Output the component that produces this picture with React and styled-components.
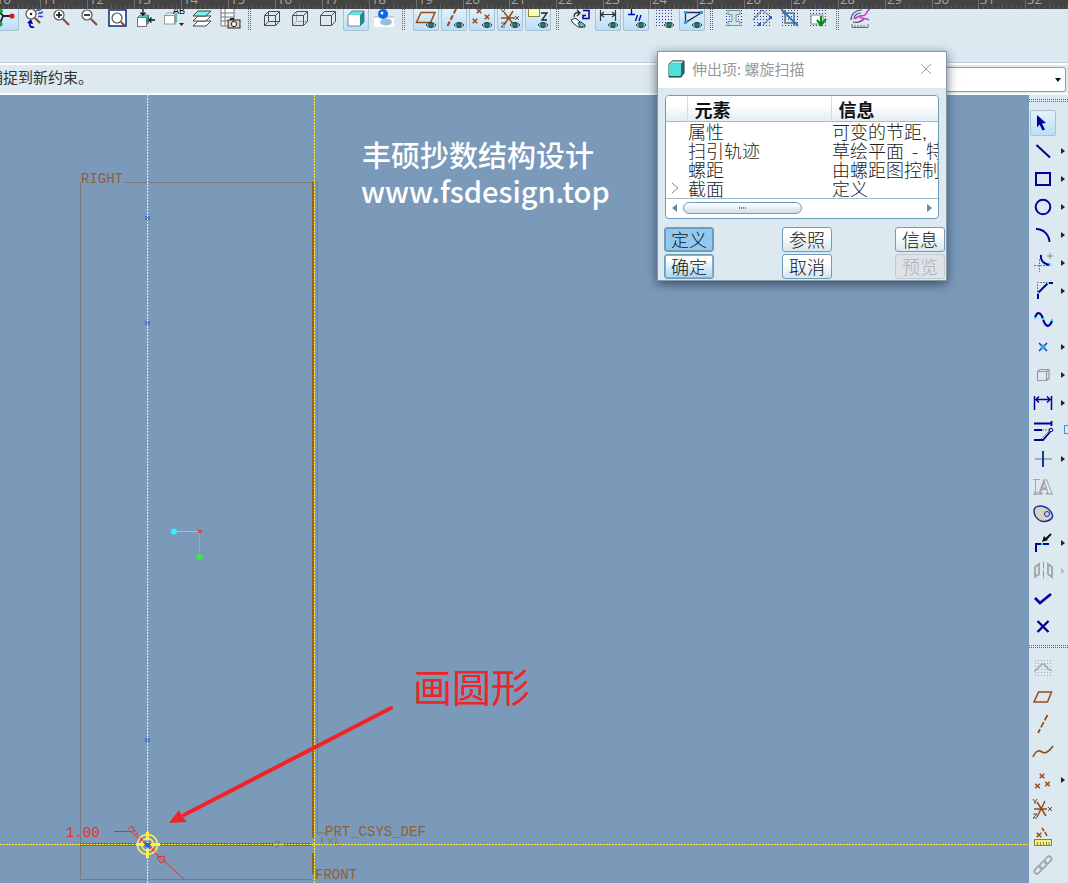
import React from "react";
import styled, { createGlobalStyle, css } from "styled-components";

const sans = `"Noto Sans CJK SC", "Open Sans", sans-serif`;
const navy = "#00009a";
const brown = "#9a4a14";
const panel = "#dce9f1";
const dots = `linear-gradient(transparent 1px, ${panel} 1px) 0 0 / 2px 2px, linear-gradient(90deg, #3f7090 1px, transparent 1px) 0 0 / 2px 2px`;

const GlobalStyle = createGlobalStyle`
  * { box-sizing: border-box; }
  body { margin: 0; background: ${panel}; font-family: ${sans}; color: #222; }
  button { font: inherit; }
`;

const Page = styled.div`
  position: relative;
  display: flex;
  flex-direction: column;
  height: 100vh;
  overflow: hidden;
`;

const RulerBar = styled.div`
  flex: none;
  height: 9px;
  background: #444;
  overflow: hidden;
`;

const RulerSvg = styled.svg`
  display: block;
  width: 100%;
  height: 9px;
  font: 13px "Open Sans", sans-serif;
`;

const ToolArea = styled.header`
  flex: none;
  height: 54px;
  border-bottom: 1px solid #bccbd6;
`;

const ToolRow = styled.div`
  display: flex;
  align-items: flex-end;
  height: 22px;
  margin-left: -8px;
  overflow: hidden;
`;

const Cell = styled.div`
  flex: none;
  display: flex;
  align-items: center;
  width: ${(p) => (p.$side ? "39px" : "28px")};
  height: ${(p) => (p.$side ? "28px" : "26px")};
  padding-left: 1px;
`;

const IconButton = styled.button`
  flex: none;
  width: 26px;
  height: 26px;
  padding: 0;
  border: 0;
  border-radius: 2px;
  background: transparent;
  ${(p) =>
    p.$pressed &&
    css`
      background: linear-gradient(#e6f4fc, #b9def6);
      box-shadow: inset 0 0 0 1px #a9c3d2;
    `}
  svg { display: block; }
`;

const Grip = styled.div`
  flex: none;
  width: 14px;
  height: 26px;
  padding-left: 4px;
  &::before {
    content: "";
    display: block;
    width: 4px;
    height: 26px;
    background: ${dots};
  }
`;

const Message = styled.div`
  flex: none;
  display: flex;
  align-items: center;
  justify-content: space-between;
  height: 32px;
  border-top: 2px solid #fff;
  border-bottom: 2px solid #f6fafc;
  padding-right: 2px;
`;

const MessageText = styled.p`
  margin: 0 0 0 -12px;
  padding-bottom: 4px;
  font-size: 15px;
  line-height: 24px;
  color: #333;
`;

const Filter = styled.select`
  width: 330px;
  height: 25px;
  border: 1px solid #79a3bf;
  border-radius: 3px;
  appearance: none;
  background: #fff;
`;

const FilterWrap = styled.label`
  position: relative;
  display: flex;
  &::after {
    content: "";
    position: absolute;
    right: 5px;
    top: 11px;
    border: 3px solid transparent;
    border-top: 4px solid #111;
    border-bottom: 0;
  }
`;

const Main = styled.main`
  flex: 1;
  display: flex;
  min-height: 0;
`;

const Viewport = styled.section`
  flex: 1;
  min-width: 0;
  background: #7b9aba;
  svg { display: block; width: 100%; height: 100%; }
`;

const CadText = styled.text`
  font: 14px "Liberation Mono", monospace;
  fill: ${(p) => p.$color || "#8f6038"};
`;

const NoteText = styled.text`
  font-family: ${sans};
  font-size: ${(p) => p.$size};
  font-weight: ${(p) => p.$weight || 400};
  fill: ${(p) => p.$color};
`;

const SideBar = styled.aside`
  flex: none;
  width: 39px;
  background: ${panel};
  overflow: hidden;
`;

const SideGrip = styled.div`
  height: ${(p) => (p.$first ? "14px" : "13px")};
  padding-top: 4px;
  &::before {
    content: "";
    display: block;
    height: 4px;
    background: ${dots};
  }
`;

const More = styled.button`
  width: 8px;
  height: 12px;
  margin-left: 5px;
  padding: 0;
  border: 0;
  background: none;
  &::before {
    content: "";
    display: block;
    width: 0;
    border: 3px solid transparent;
    border-left: 4px solid ${(p) => (p.$off ? "#b5bcc4" : "#222")};
    border-right: 0;
  }
`;

const FlyoutEdge = styled.span`
  flex: none;
  width: 12px;
  height: 9px;
  margin: 0 0 4px 8px;
  border: 1px solid #4f86ee;
`;

const Dialog = styled.section`
  position: absolute;
  top: 52px;
  right: 122px;
  width: 288px;
  background: ${panel};
  box-shadow: 0 0 0 1px #8997a4, 0 3px 10px 1px rgba(20, 35, 55, 0.65);
`;

const TitleBar = styled.header`
  display: flex;
  align-items: center;
  height: 36px;
  padding: 0 13px 2px 9px;
  gap: 6px;
  background: #fff;
`;

const Title = styled.h1`
  flex: 1;
  margin: 0;
  font-size: 15px;
  font-weight: 400;
  line-height: 24px;
  color: #999;
`;

const CloseButton = styled.button`
  width: 14px;
  height: 14px;
  padding: 0;
  border: 0;
  background: none;
  svg { display: block; }
`;

const DialogBody = styled.div`
  padding: 7px 1px 1px 7px;
`;

const ListBox = styled.div`
  width: 274px;
  height: 124px;
  border: 1px solid #6f9cb8;
  border-radius: 4px;
  background: #fff;
  overflow: hidden;
`;

const ElementTable = styled.table`
  width: 272px;
  table-layout: fixed;
  border-collapse: collapse;
  font-size: 18px;
  font-weight: 300;
  line-height: 19px;
`;

const HeadCell = styled.th`
  width: ${(p) => p.$w};
  height: 25px;
  padding: 2px 0 0 7px;
  border-bottom: 1px solid #9dbccd;
  border-right: 1px solid #cfdee6;
  background: linear-gradient(#fff, #fff 35%, #e2edf3);
  text-align: left;
  line-height: 22px;
  font-weight: 700;
  color: #111;
  &:last-child { border-right: 0; }
`;

const BodyCell = styled.td`
  height: 19px;
  padding: 0 0 0 1px;
  white-space: pre;
  overflow: hidden;
  svg { display: block; margin-left: 4px; }
`;

const ScrollRow = styled.div`
  display: flex;
  align-items: center;
  height: 20px;
  padding: 0 5px;
  border-top: 1px solid #9dbccd;
`;

const ScrollArrow = styled.button`
  width: 7px;
  height: 10px;
  padding: 0;
  border: 0;
  background: none;
  svg { display: block; }
`;

const Track = styled.div`
  flex: 1;
  padding: 0 5px;
`;

const Thumb = styled.div`
  display: flex;
  align-items: center;
  justify-content: center;
  width: 119px;
  height: 12px;
  border: 1px solid #6f9cb8;
  border-radius: 6px;
  background: linear-gradient(#fff, #cfe0ea);
  &::before {
    content: "";
    width: 8px;
    height: 2px;
    background: linear-gradient(90deg, #5e8aa6 1px, transparent 1px) 0 0 / 2px 2px;
  }
`;

const Actions = styled.div`
  display: grid;
  grid-template-columns: 118px 113px 50px;
  row-gap: 2px;
  padding-top: 8px;
  margin-left: -1px;
`;

const ActionButton = styled.button`
  width: 50px;
  height: 25px;
  padding: 0;
  border: 1px solid #6f9cb8;
  border-radius: 3px;
  background: linear-gradient(#fff 30%, #d5e6f0);
  font-size: 18px;
  font-weight: 300;
  line-height: 21px;
  color: #111;
  ${(p) => p.$active && css`background: #93c8f0; box-shadow: inset 0 0 0 1px #6f9cb8;`}
  ${(p) => p.$primary && css`background: linear-gradient(#fff 20%, #a9d3ef); box-shadow: inset 0 0 0 1px #86aec7;`}
  &:disabled { background: #dde3e6; border-color: #c0cad0; color: #aab0b4; }
`;

/* ---------- icon parts ---------- */

const Ico = ({ children }) => (
  <svg width="26" height="26" viewBox="0 0 26 26" fill="none" aria-hidden="true">
    {children}
  </svg>
);
const Eye = () => (
  <g>
    <path d="M13 20q5-5 10 0q-5 5-10 0z" fill="#fff" stroke="#333" />
    <circle cx="18" cy="20" r="2.4" fill="#117f7b" stroke="#143c3c" strokeWidth=".8" />
  </g>
);
const Cross = ({ x, y, r = 2.3, c = brown }) => (
  <path d={`M${x - r} ${y - r}l${2 * r} ${2 * r}m0 ${-2 * r}l${-2 * r} ${2 * r}`} stroke={c} strokeWidth="1.5" />
);
const Grid = ({ c = "#2438b0", x = 5, y = 5, n = 6 }) => (
  <path
    d={Array.from({ length: n }, (_, i) => `M${x} ${y + i * 3 + 0.5}h${(n - 1) * 3 + 1}`).join("")}
    stroke={c}
    strokeDasharray="1 2"
  />
);
const Lens = ({ x, y, r = 5, len = 6, mark }) => (
  <g>
    <path d={`M${x + 4} ${y + 4}l${len} ${len}`} stroke="#8b4c38" strokeWidth="2.2" />
    <circle cx={x} cy={y} r={r} fill="#fff" stroke="#555" strokeWidth="1.2" />
    {mark && <path d={mark} stroke="#111" strokeWidth="1.6" />}
  </g>
);
const Cyan = ({ pts }) => pts.map(([x, y]) => <rect key={`${x}-${y}`} x={x - 1} y={y - 1} width="2" height="2" fill="#20e4f4" />);

const I = {
  spin: <><path d="M5 5l5 6-4 10M10 11h7" stroke="#222" strokeWidth="1.8" /><circle cx="8" cy="6" r="2" fill="#14a33a" /><circle cx="7" cy="19" r="2.500" fill="#14a33a" /><circle cx="19" cy="11" r="2.6" fill="#e01818" /></>,
  refit: <><Lens x={10} y={9} len={5} /><circle cx="10" cy="9" r="1.3" fill="#222" /><path d="M15 6l2-1.500 1 1 3-2M17 9l2-1.500 1 1 2-2M17 12l2-1 1 1 2-1" stroke="#2840b8" strokeWidth="1.2" /><path d="M13 22c-4 1-5-2-4-5" stroke={navy} strokeWidth="1.800" /><path d="M6 18l4-4 2 5z" fill={navy} /></>,
  zin: <Lens x={10} y={10} mark="M7 10h6M10 7v6" />,
  zout: <Lens x={10} y={10} mark="M7 10h6" />,
  zfit: <><rect x="4" y="5" width="17" height="16" fill="#fff" stroke="#123a80" strokeWidth="1.6" /><Lens x={12} y={13} len={4} /></>,
  orient: <><path d="M4 13l3-3h9l-3 3z" fill="#3ed5d0" stroke="#666" strokeWidth=".7" /><path d="M13 13l3-3v8l-3 3z" fill="#1f8e8e" /><rect x="4.500" y="12.500" width="9" height="9" fill="#fff" stroke="#777" /><path d="M10 3v7M7.500 7.500L10 10l2.500-2.500M22 15h-6M18.500 12.500L16 15l2.500 2.500" stroke="#111" strokeWidth="1.3" /></>,
  saved: <><path d="M13 11l3-3v9l-3 3z" fill="#6aa9a9" /><path d="M3.500 11l3-3h9l-3 3z" fill="#dff" stroke="#777" strokeWidth=".7" /><rect x="3.500" y="10.500" width="10" height="8.500" fill="#fff" stroke="#999" /><text x="12" y="9" fontSize="10" fontFamily="Liberation Mono" fill="#111">AB</text><path d="M18 18h5l-2.500 3z" fill="#222" /></>,
  layers: <><path d="M4 21l5-5h13l-5 5z" fill="#fff" stroke="#444" /><path d="M4 16l5-5h13l-5 5z" fill="#fff" stroke="#444" /><path d="M4 11l5-5h13l-5 5z" fill="#7deff0" stroke="#444" /></>,
  camera: <><path d="M4 3h13v18H4zM8 3v18M4 8h13M4 12h13M4 16h13" fill="#fff" stroke="#777" /><rect x="11" y="15" width="12" height="8" fill="#d6d1b4" stroke="#222" /><path d="M13 14h4" stroke="#222" strokeWidth="2" /><circle cx="17" cy="19" r="2.600" fill="#fff" stroke="#222" /></>,
  wire: <path d="M5.500 10.500h11v10h-11zM9.500 6.500h11v10h-11zM5.500 10.500l4-4M16.500 10.500l4-4M5.500 20.500l4-4M16.500 20.500l4-4" stroke="#4c4c4c" />,
  hidden: <><path d="M9.500 7v9.500h11M5.500 20.500l4-4" stroke="#aaa" /><path d="M5.500 10.500h11v10h-11zM5.500 10.500l4-4h11v10l-4 4M16.500 10.500l4-4" stroke="#4c4c4c" /></>,
  nohid: <path d="M5.500 10.500h11v10h-11zM5.500 10.500l4-4h11v10l-4 4M16.500 10.500l4-4" stroke="#4c4c4c" />,
  shade: <><path d="M5 10l4-4h12l-4 4z" fill="#5fe6e6" /><path d="M17 10l4-4v11l-4 4z" fill="#208c8c" /><rect x="5" y="10" width="12" height="11" fill="#fff" /><path d="M5 10l4-4h12v11l-4 4H5z" stroke="#557" strokeWidth=".7" /></>,
  ball: <><rect x="3" y="12" width="20" height="10" fill="#fff" /><path d="M3 12h20" stroke="#a7b4bd" /><ellipse cx="15" cy="17" rx="6" ry="3.500" fill="#9ebcd8" /><circle cx="12" cy="9" r="5" fill="#0968ef" /><circle cx="11" cy="8" r="1.500" fill="#e5f4ff" /></>,
  planeE: <><path d="M8 7.500h14l-4.500 10H3.500z" stroke={brown} strokeWidth="1.500" /><Eye /></>,
  axisE: <><path d="M15 4L6 22" stroke={brown} strokeWidth="2" strokeDasharray="5 2" /><Eye /></>,
  ptsE: <><Cross x={10} y={6} /><Cross x={6} y={16} /><Cross x={18} y={12} /><Eye /></>,
  csysE: <><path d="M4 13h14M7 7l9 12M16 6L7 20" stroke={brown} strokeWidth="1.500" /><path d="M4 4l2 3 2-3M4 18h4l-4 4h4M18 11l4 4m0-4l-4 4" stroke="#555" /><Eye /></>,
  noteE: <><rect x="3.500" y="2.500" width="11" height="9" fill="#fffdb0" stroke="#888844" /><path d="M16 8h6l-5 7h5" stroke="#222" strokeWidth="1.300" /><Eye /></>,
  sketchView: <><path d="M16 5.500h6v8h-6v-3h3" stroke={navy} strokeWidth="1.500" /><path d="M7 12c0-4 2-5 6-4M10 5l3 3-3 3" stroke="#222" strokeWidth="1.200" /><path d="M4 15l4-2 3 2 5 5v2h-5l-5-4z" fill="#eafcfc" stroke="#333" /><path d="M11 18l3-1 4 3v2h-5z" fill="#3dd1ce" stroke="#333" /></>,
  dimE: <><path d="M5.500 5v11M20.500 5v11M6 9.500h14M9 7l-3 2.500 3 2.500M17 7l3 2.500-3 2.500" stroke="#333" strokeWidth="1.200" /><Eye /></>,
  conE: <><path d="M8.500 3v7M5 9.500h7M14.500 10l-2 6M18 10l-2 6" stroke={navy} strokeWidth="1.300" /><Eye /></>,
  gridE: <><Grid /><Eye /></>,
  vertE: <><path d="M22 7.500H6.500v10L22 8" stroke="#222a60" strokeWidth="1.300" /><rect x="5" y="6" width="3" height="3" fill="#26a6ea" /><rect x="21" y="6" width="3" height="3" fill="#26a6ea" /><rect x="5" y="16" width="3" height="3" fill="#26a6ea" /><Eye /></>,
  beam: <><Grid /><path d="M7 5.500h12v4h-4v7h4v4H7v-4h4v-7H7z" fill="#c9e9ea" stroke="#7d9098" /></>,
  diamond: <><Grid /><path d="M4 15L13 5l9 7-8 8" stroke="#7c8a94" strokeWidth="1.200" /><rect x="20" y="11" width="3" height="3" fill="#2d67dc" /><rect x="9" y="18" width="3" height="3" fill="#2d67dc" /></>,
  overlap: <><Grid /><path d="M8 5v13h13M5 8h12v13" stroke="#68737c" strokeWidth="1.500" /><path d="M4 4l17 17" stroke="#1672df" strokeWidth="1.800" /></>,
  verify: <><Grid /><path d="M6 10h12v9H6z" fill="#fff" stroke="#888" /><path d="M12 15l4 5 5-6M16 11v9" stroke="#0c8a20" strokeWidth="2.200" /></>,
  measure: <><path d="M4 15c0-7 6-10 11-10M6 17c5 1 9-1 11-3M7 14c0-4 4-6 7-6" stroke="#4c4b85" strokeWidth="1.200" /><path d="M8 14c4-5 8-2 10-4s2-5 5-6M11 11c4 4 7 1 11 4" stroke="#d735c1" strokeWidth="1.500" /><path d="M5 19v3.500h16V19M8 20v2M11 20v2M14 20v2M17 20v2" stroke="#666" /></>,
  select: <path d="M7 5l9 8-4 .5 3 6-2.500 1-3-6-2.500 3z" fill={navy} />,
  line: <path d="M6.500 7L20 19.500" stroke={navy} strokeWidth="2" />,
  rect: <rect x="6" y="7" width="14" height="12" stroke={navy} strokeWidth="2" />,
  circle: <circle cx="13" cy="13" r="7.300" stroke={navy} strokeWidth="2" />,
  arc: <path d="M6 7c8 0 13 6 13.500 13" stroke={navy} strokeWidth="2" />,
  fillet: <><path d="M4 15.500h14M9.500 9v13" stroke="#777" strokeDasharray="2 1" /><path d="M20 3v6M17 6h6" stroke="#888" /><path d="M11 5c-1 6 4 10 10 10" stroke={navy} strokeWidth="2" /><Cyan pts={[[20, 15]]} /></>,
  chamfer: <><path d="M18 4.500H7.500V16" stroke="#777" strokeDasharray="2 1" /><path d="M8 21v-6L18 5h5" stroke={navy} strokeWidth="2" /><Cyan pts={[[8, 15], [18, 5]]} /></>,
  spline: <><path d="M5 12c2-7 6-6 8 1s6 10 9 2" stroke={navy} strokeWidth="2.200" /><Cyan pts={[[5, 12], [13, 13], [22, 14]]} /></>,
  point: <><Cross x={13} y={13} r={4} c="#1238a5" /><circle cx="13" cy="13" r="2.500" fill="#36a0f2" /></>,
  offset: <path d="M7.500 9.500h9v9h-9zM10 7.500h9v9h-2M7.500 9.500L10 7.500M16.500 9.500l2.500-2M16.500 18.500l2.500-2" stroke="#9a9a9a" strokeWidth="1.200" />,
  dim: <path d="M4.500 6v14M21.500 6v14M6 9.500h14M9 6.500l-3 3 3 3M17 6.500l3 3-3 3" stroke={navy} strokeWidth="1.500" />,
  modify: <><path d="M4 5.500h17M21.500 3v5M4 12h8M20 14l-7 8H4" stroke={navy} strokeWidth="1.800" /><path d="M12 12h7M11 21l8-8" stroke="#777" strokeDasharray="2 1" /><circle cx="21" cy="12" r="1.800" fill="#bdf" stroke={navy} /></>,
  constrain: <><path d="M5 13h17" stroke="#8ca0ad" strokeWidth="1.500" /><path d="M13 5v16" stroke="#123c92" strokeWidth="2" /></>,
  text: <><path d="M5.500 5v16M3 5.500h7M3 20.500h5M3.500 17.500l2 3 2-3" stroke="#a2a8ad" /><text x="8" y="20" fontSize="20" fontFamily="Liberation Serif" fontWeight="700" fill="#eef3f6" stroke="#9ca2a7">A</text></>,
  palette: <><path d="M4 9c0-5 6-6 11-4s9 8 7 11-9 5-13 2-5-5-5-9z" fill="#d9d2bd" stroke="#1b2aa2" strokeWidth="1.400" /><circle cx="17" cy="12" r="2.500" fill="#bcd6f0" stroke="#1b2aa2" /></>,
  trim: <><path d="M6 22v-8h13" stroke={navy} strokeWidth="2" /><path d="M21 4l-6 6" stroke="#111" strokeWidth="2" /><path d="M12 12l2-6 4 4z" fill="#111" /><Cyan pts={[[12, 14]]} /></>,
  mirror: <><path d="M5 9l4-3v10l-4 3zM22 9l-4-3v10l4 3z" stroke="#9ea5aa" strokeWidth="1.800" /><path d="M13.500 4v18" stroke="#8f979d" strokeDasharray="6 1 1 1" /></>,
  ok: <path d="M5 12l5 5 11-9" stroke={navy} strokeWidth="2.600" />,
  cancel: <path d="M7.500 7l11 11M18.500 7l-11 11" stroke={navy} strokeWidth="2.300" />,
  sketch: <><Grid c="#a5a9ac" /><path d="M4 16c4 0 5-7 9-7s4 8 9 6" stroke="#a5a9ac" strokeWidth="1.500" /></>,
  plane: <path d="M8.500 9h13l-4 10H4z" stroke={brown} strokeWidth="1.500" />,
  axis: <path d="M17.500 4L8 22" stroke={brown} strokeWidth="1.800" strokeDasharray="6 2" />,
  curve: <path d="M3 18c3-7 6-7 9-5s6 1 11-6" stroke={brown} strokeWidth="1.600" />,
  points: <><Cross x={12} y={9} /><Cross x={7.500} y={19} /><Cross x={17.500} y={17} /></>,
  csys: <><path d="M4 14h13M7 7l9 14M15 6L7 22" stroke={brown} strokeWidth="1.500" /><path d="M3 4l2 3 2-3M5 7v2M3 19h4l-4 4h4M18 12l4 4m0-4l-4 4" stroke="#555" /></>,
  analysis: <><Cross x={9} y={12} /><path d="M12 5l2 3M15 9l2 4" stroke={brown} strokeWidth="1.600" /><rect x="4.500" y="16.500" width="17" height="6" fill="#f5ef81" stroke="#8b8434" /><path d="M7.500 19v3M10.500 19v3M13.500 19v3M16.500 19v3M19 19v3" stroke="#8b8434" /></>,
  chain: <g stroke="#a2a8ac" strokeWidth="1.800"><rect x="-4" y="-2.500" width="8" height="5" rx="2.500" transform="translate(8 19) rotate(-45)" /><rect x="-4" y="-2.500" width="8" height="5" rx="2.500" transform="translate(13 14) rotate(-45)" /><rect x="-4" y="-2.500" width="8" height="5" rx="2.500" transform="translate(18 9) rotate(-45)" /></g>,
};

const toolGroups = [
  ["spin", "refit", "zin", "zout", "zfit", "orient", "saved", "layers", "camera"],
  ["wire", "hidden", "nohid", "shade", "ball"],
  ["planeE", "axisE", "ptsE", "csysE", "noteE"],
  ["sketchView", "dimE", "conE", "gridE", "vertE"],
  ["beam", "diamond", "overlap", "verify"],
  ["measure"],
];
const pressedTools = ["spin", "shade", "planeE", "axisE", "ptsE", "csysE", "noteE", "dimE", "conE", "vertE"];

const sketchTools = [
  "select", "line", "rect", "circle", "arc", "fillet", "chamfer", "spline", "point", "offset",
  "dim", "modify", "constrain", "text", "palette", "trim", "mirror", "ok", "cancel",
];
const datumTools = ["sketch", "plane", "axis", "curve", "points", "csys", "analysis", "chain"];
const withMenu = ["line", "rect", "circle", "arc", "fillet", "chamfer", "point", "offset", "dim", "constrain", "trim", "mirror", "points"];

const elements = [
  ["属性", "可变的节距,"],
  ["扫引轨迹", "草绘平面  -  特征"],
  ["螺距", "由螺距图控制"],
  ["截面", "定义"],
];

function Ruler() {
  const marks = Array.from({ length: 23 }, (_, i) => i);
  return (
    <RulerBar>
      <RulerSvg aria-hidden="true">
        {marks.map((i) => {
          const x = Math.round(-6.5 + i * 46.9);
          return (
            <g key={i}>
              <path d={`M${x + 0.5} 0v9`} stroke="#707070" />
              <path
                d={Array.from({ length: 9 }, (_, k) => `M${x + Math.round((k + 1) * 4.7) + 0.5} ${k === 4 ? 4 : 6}v5`).join("")}
                stroke="#5a5a5a"
              />
              <text x={x + 2} y="4" fill="#a8a8a8">{i + 10}</text>
            </g>
          );
        })}
      </RulerSvg>
    </RulerBar>
  );
}

function SideTool({ name }) {
  return (
    <Cell $side>
      <IconButton $pressed={name === "select"} aria-label={name}><Ico>{I[name]}</Ico></IconButton>
      {withMenu.includes(name) && <More $off={name === "mirror"} aria-label={`${name} menu`} />}
      {name === "modify" && <FlyoutEdge />}
    </Cell>
  );
}

function Drawing() {
  return (
    <svg>
      <g fill="none" strokeWidth="1">
        <path d="M124 87.500H317M80.500 87V784.500H311" stroke="#79797e" />
        <path d="M317.500 87V740" stroke="#96755f" />
        <path d="M313 87V743M313 758V779" stroke="#94602f" strokeWidth="2" />
        <path d="M80 749.500H274M284 749.500H311" stroke="#806f3b" strokeWidth="3" />
        <path d="M275 747h5l-4 6M318 738h8M322 742v8M328 743l5 6m0-6l-5 6M336 742v8h5" stroke="#857052" />
      </g>
      <line x1="147.5" y1="0" x2="147.5" y2="100%" stroke="#fbf3a4" strokeDasharray="2 1" />
      <line x1="148.5" y1="0" x2="148.5" y2="100%" stroke="#9aa5c8" strokeDasharray="1 2" />
      <line x1="314.5" y1="0" x2="314.5" y2="100%" stroke="#ffe92e" strokeDasharray="2 1" />
      <line x1="0" y1="749.5" x2="100%" y2="749.5" stroke="#ffe92e" strokeDasharray="2 1" />
      {[123, 228, 645].map((y) => (
        <path key={y} d={`M145 ${y - 1.5}h2m1 0h2M145 ${y + 1.5}h2m1 0h2M145 ${y}h5`} stroke="#2765ef" />
      ))}
      <CadText x="81" y="88">RIGHT</CadText>
      <CadText x="325" y="741">PRT_CSYS_DEF</CadText>
      <CadText x="315" y="784">FRONT</CadText>
      <CadText x="66" y="742" $color="#ef2c2c">1.00</CadText>
      <g stroke="#ee2929" fill="none">
        <path d="M114 736.500h17L184 784" />
        <path d="M128 734l4-3 3 5M131 738l3-3 4 5M157 762l7-1 1 5-4 2z" />
      </g>
      <g stroke="#fff04a" fill="none" strokeWidth="1.500">
        <circle cx="147.500" cy="749.500" r="10" />
        <circle cx="147.500" cy="749.500" r="6" />
        <path d="M136 749.500h8M151 749.500h9M147.500 737v8M147.500 754v9" strokeWidth="3" />
      </g>
      <path d="M140 743l15 13" stroke="#ee2929" />
      <rect x="146" y="748" width="4" height="4" fill="#2864e4" />
      <path d="M174 436.500h24" stroke="#2ff0ff" />
      <path d="M199.500 438v23" stroke="#30ee42" />
      <circle cx="174" cy="436.500" r="3" fill="#2ff0ff" />
      <circle cx="199.500" cy="462" r="3" fill="#30ee42" />
      <path d="M197 435h5v3h-3z" fill="#f04040" />
      <NoteText x="362" y="72" $size="29px" $weight="500" $color="#fff">丰硕抄数结构设计</NoteText>
      <NoteText x="361" y="108" $size="29px" $weight="500" $color="#fff">www.fsdesign.top</NoteText>
      <NoteText x="413" y="607" $size="39px" $color="#ee2428">画圆形</NoteText>
      <path d="M391 613L184 720" stroke="#ee2428" strokeWidth="4" strokeLinecap="round" />
      <path d="M169 728l10-13 3 6 5 6z" fill="#ee2428" />
    </svg>
  );
}

export default function App() {
  return (
    <Page>
      <GlobalStyle />
      <Ruler />
      <ToolArea>
        <ToolRow>
          {toolGroups.map((group, g) => (
            <React.Fragment key={g}>
              {g > 0 && <Grip />}
              {group.map((name) => (
                <Cell key={name}>
                  <IconButton $pressed={pressedTools.includes(name)} aria-label={name}><Ico>{I[name]}</Ico></IconButton>
                </Cell>
              ))}
            </React.Fragment>
          ))}
        </ToolRow>
      </ToolArea>
      <Message>
        <MessageText>捕捉到新约束。</MessageText>
        <FilterWrap><Filter aria-label="filter" /></FilterWrap>
      </Message>
      <Main>
        <Viewport><Drawing /></Viewport>
        <SideBar>
          <SideGrip $first />
          {sketchTools.map((name) => <SideTool key={name} name={name} />)}
          <SideGrip />
          {datumTools.map((name) => <SideTool key={name} name={name} />)}
        </SideBar>
      </Main>
      <Dialog role="dialog" aria-labelledby="dialog-title">
        <TitleBar>
          <svg width="19" height="18" viewBox="0 0 19 18" aria-hidden="true">
            <path d="M2 4l3-3h12v12l-3 4H2z" fill="#23706c" stroke="#173f40" />
            <path d="M2 4l3-3h12l-3 3z" fill="#a5efe9" stroke="#345" strokeWidth=".6" />
            <rect x="2" y="4" width="12" height="12" rx="1" fill="#4fe0da" />
          </svg>
          <Title id="dialog-title">伸出项: 螺旋扫描</Title>
          <CloseButton aria-label="close">
            <svg width="14" height="14" viewBox="0 0 14 14"><path d="M2 2l10 10M12 2L2 12" stroke="#999" /></svg>
          </CloseButton>
        </TitleBar>
        <DialogBody>
          <ListBox>
            <ElementTable>
              <thead>
                <tr>
                  <HeadCell $w="21px" />
                  <HeadCell $w="144px">元素</HeadCell>
                  <HeadCell $w="107px">信息</HeadCell>
                </tr>
              </thead>
              <tbody>
                {elements.map(([name, info], i) => (
                  <tr key={name}>
                    <BodyCell>
                      {i === 3 && <svg width="8" height="12" viewBox="0 0 8 12"><path d="M1 1l6 5-6 5" fill="none" stroke="#a77a5c" /></svg>}
                    </BodyCell>
                    <BodyCell>{name}</BodyCell>
                    <BodyCell>{info}</BodyCell>
                  </tr>
                ))}
              </tbody>
            </ElementTable>
            <ScrollRow>
              <ScrollArrow aria-label="scroll left"><svg width="7" height="10"><path d="M6 1v8L1 5z" fill="#5d90ae" /></svg></ScrollArrow>
              <Track><Thumb /></Track>
              <ScrollArrow aria-label="scroll right"><svg width="7" height="10"><path d="M1 1v8l5-4z" fill="#5d90ae" /></svg></ScrollArrow>
            </ScrollRow>
          </ListBox>
          <Actions>
            <ActionButton $active>定义</ActionButton>
            <ActionButton>参照</ActionButton>
            <ActionButton>信息</ActionButton>
            <ActionButton $primary>确定</ActionButton>
            <ActionButton>取消</ActionButton>
            <ActionButton disabled>预览</ActionButton>
          </Actions>
        </DialogBody>
      </Dialog>
    </Page>
  );
}
